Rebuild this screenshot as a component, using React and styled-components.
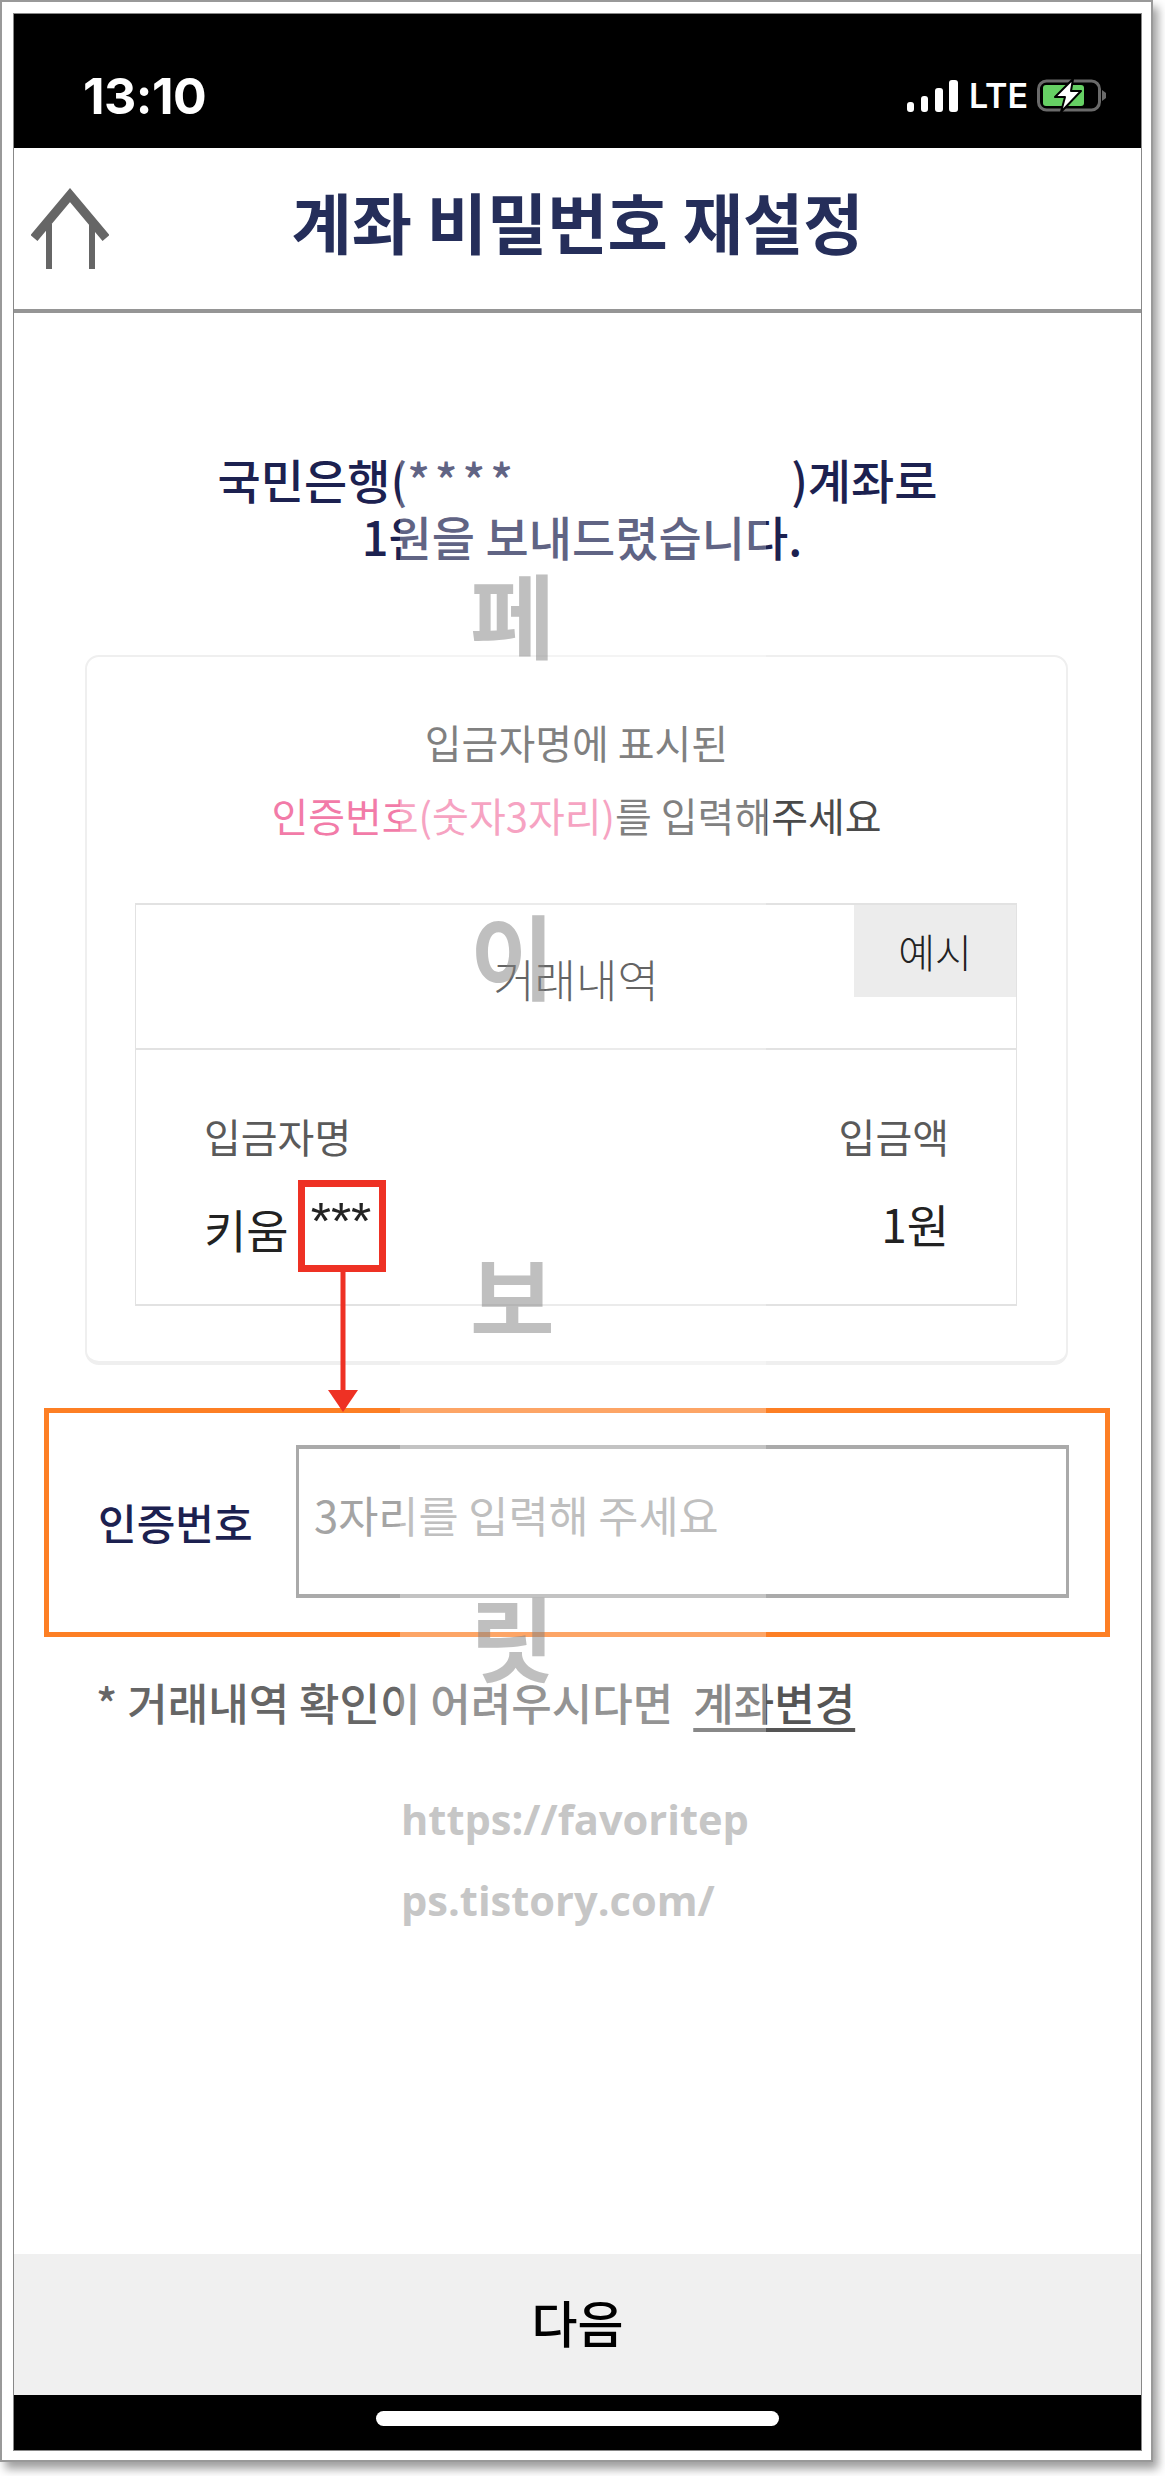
import React from "react";
import styled, { createGlobalStyle } from "styled-components";

const GlobalStyle = createGlobalStyle`
  html, body { margin: 0; padding: 0; background: #fff; }
  body { font-family: "Noto Sans CJK KR", "Noto Sans", sans-serif; }
`;

const Page = styled.div`
  width: 1165px;
  height: 2476px;
  overflow: hidden;
`;

const Frame = styled.div`
  box-sizing: border-box;
  width: 1153px;
  height: 2462px;
  padding: 11px;
  background: #fff;
  border: 2px solid #999;
  box-shadow: 5px 7px 9px rgba(0, 0, 0, 0.38);
`;

const Screen = styled.div`
  display: flex;
  flex-direction: column;
  box-sizing: border-box;
  width: 1129px;
  height: 2438px;
  border: 1px solid #888;
  background: #fff;
`;

const StatusBar = styled.div`
  flex: none;
  display: flex;
  align-items: center;
  justify-content: space-between;
  box-sizing: border-box;
  height: 134px;
  padding: 29px 35px 0 69px;
  background: #000;
  color: #fff;
  font-family: Inter, sans-serif;
`;

const Time = styled.span`
  font-size: 50px;
  font-weight: 700;
  letter-spacing: -0.5px;
  line-height: 48px;
`;

const StatusIcons = styled.div`
  display: flex;
  align-items: center;
`;

const Lte = styled.span`
  margin: 0 9px 0 11px;
  font-size: 34px;
  font-weight: 600;
  line-height: 34px;
`;

const Header = styled.header`
  flex: none;
  display: grid;
  grid-template-columns: 1fr auto 1fr;
  align-items: center;
  height: 161px;
  border-bottom: 4px solid #959595;
`;

const BackIcon = styled.svg`
  margin-left: 17px;
`;

const Title = styled.h1`
  margin: 0 0 16px;
  color: #252e5a;
  font-size: 65.5px;
  font-weight: 700;
  line-height: 80px;
`;

const Content = styled.main`
  position: relative;
  flex: 1;
  padding-top: 137px;
`;

const Message = styled.p`
  margin: 0 0 91px;
  color: #1c2150;
  font-size: 47px;
  font-weight: 500;
  line-height: 57px;
  text-align: center;
`;

const MessageLine = styled.span`
  display: block;
  padding-left: ${(p) => p.$indent || 0}px;
`;

const MaskedDigits = styled.span`
  letter-spacing: 5px;
`;

const Redacted = styled.span`
  display: inline-block;
  width: 273px;
`;

const Card = styled.section`
  box-sizing: border-box;
  width: 983px;
  height: 710px;
  margin-left: 71px;
  padding: 49px 48px 0;
  border: 2px solid #efefef;
  border-bottom-width: 4px;
  border-radius: 14px;
`;

const Guide = styled.p`
  margin: 0 0 51px;
  color: #4a4a4a;
  font-size: 40px;
  line-height: 73px;
  text-align: center;
`;

const Pink = styled.span`
  color: #f27ba8;
`;

const Table = styled.div`
  position: relative;
  box-sizing: border-box;
  width: 882px;
  height: 403px;
  border: 1px solid #e2e2e2;
  border-top-width: 2px;
  border-bottom-width: 2px;
`;

const TableHead = styled.div`
  box-sizing: border-box;
  height: 145px;
  padding-top: 46px;
  border-bottom: 2px solid #e2e2e2;
  color: #222;
  font-size: 45px;
  font-weight: 300;
  line-height: 56px;
  text-align: center;
`;

const ExampleTag = styled.span`
  position: absolute;
  top: 0;
  right: 0;
  width: 162px;
  height: 92px;
  background: #ececec;
  color: #222;
  font-size: 40px;
  font-weight: 300;
  line-height: 92px;
  text-align: center;
`;

const TableRow = styled.div`
  display: flex;
  justify-content: space-between;
  padding: 61px 67px 0 68px;
`;

const Column = styled.div`
  display: flex;
  flex-direction: column;
  gap: 34px;
  align-items: ${(p) => (p.$end ? "flex-end" : "flex-start")};
`;

const RowLabel = styled.span`
  color: #5a5a5a;
  font-size: 40px;
  line-height: 50px;
`;

const RowValue = styled.span`
  color: #222;
  font-size: 46px;
  line-height: 56px;
`;

const Masked = styled.span`
  position: relative;
  display: inline-block;
  margin-left: 22px;
  color: #222;
  font-family: "Liberation Sans", sans-serif;
  font-size: 52px;
  line-height: 52px;
  vertical-align: 9px;
`;

const Callout = styled.span`
  position: absolute;
  top: -15px;
  left: -13px;
  box-sizing: border-box;
  width: 88px;
  height: 92px;
  border: 7px solid #ee3124;
`;

const CalloutArrow = styled.svg`
  position: absolute;
  top: 85px;
  left: 23px;
`;

const CodeBox = styled.div`
  display: flex;
  align-items: center;
  box-sizing: border-box;
  width: 1066px;
  height: 229px;
  margin: 43px 0 0 30px;
  padding: 0 36px 3px 49px;
  border: 5px solid #fd7f24;
`;

const CodeLabel = styled.label`
  flex: none;
  width: 198px;
  color: #1c2150;
  font-size: 42px;
  font-weight: 500;
`;

const CodeInput = styled.input`
  flex: 1;
  box-sizing: border-box;
  min-width: 0;
  height: 153px;
  padding: 0 0 14px 15px;
  border: 3px solid #aaa;
  border-top-width: 4px;
  border-bottom-width: 4px;
  border-radius: 0;
  outline: none;
  font-family: inherit;
  font-size: 43.6px;

  &::placeholder {
    color: #a4a4a4;
    opacity: 1;
  }
`;

const Note = styled.p`
  margin: 35px 0 0 82px;
  color: #666;
  font-size: 44px;
  font-weight: 500;
  line-height: 60px;
`;

const ChangeLink = styled.a`
  margin-left: 20px;
  color: #555;
  text-decoration: underline;
  text-underline-offset: 7px;
`;

const Watermark = styled.div`
  position: absolute;
  top: 128px;
  left: 386px;
  width: 366px;
  pointer-events: none;
`;

const WatermarkGlyphs = styled.div`
  display: flex;
  flex-direction: column;
  gap: 249px;
  box-sizing: border-box;
  height: 1300px;
  padding: 125px 0 0 70px;
  background: rgba(255, 255, 255, 0.3);
  color: rgba(128, 128, 128, 0.5);
  font-size: 92px;
  font-weight: 700;
  line-height: 92px;
`;

const WatermarkUrl = styled.div`
  margin-top: 38px;
  padding-left: 1px;
  color: #c6c6c6;
  font-family: "Open Sans", sans-serif;
  font-size: 41.6px;
  font-weight: 700;
  line-height: 81px;
  white-space: nowrap;
`;

const NextButton = styled.button`
  flex: none;
  height: 141px;
  padding: 0 0 8px;
  border: 0;
  background: #f0f0f0;
  color: #000;
  font-family: inherit;
  font-size: 50px;
  font-weight: 500;
`;

const HomeBar = styled.div`
  flex: none;
  display: flex;
  justify-content: center;
  box-sizing: border-box;
  height: 55px;
  padding-top: 16px;
  background: #000;
`;

const HomeIndicator = styled.span`
  width: 403px;
  height: 15px;
  border-radius: 8px;
  background: #fff;
`;

const SignalIcon = () => (
  <svg width="51" height="32" viewBox="0 0 51 32" fill="#fff">
    <rect x="0" y="22" width="7" height="10" rx="3" />
    <rect x="14" y="16" width="7" height="16" rx="3" />
    <rect x="28" y="8" width="8" height="24" rx="3" />
    <rect x="42" y="0" width="9" height="32" rx="3" />
  </svg>
);

const BatteryIcon = () => (
  <svg width="69" height="33" viewBox="0 0 69 33">
    <rect x="1.5" y="2" width="61" height="29" rx="8" fill="none" stroke="#6a6a6a" strokeWidth="3" />
    <path d="M65 11 L69 14 V19 L65 22 Z" fill="#6a6a6a" />
    <rect x="6" y="6" width="41" height="21" rx="3" fill="#66d064" />
    <path
      d="M36 0 L18 18 H28 L24 33 L44 12 H34 L36 0 Z"
      fill="#fff"
      stroke="#000"
      strokeWidth="2"
      strokeLinejoin="round"
    />
  </svg>
);

const App = () => {
  return (
    <Page>
      <GlobalStyle />
      <Frame>
        <Screen>
          <StatusBar>
            <Time>13:10</Time>
            <StatusIcons>
              <SignalIcon />
              <Lte>LTE</Lte>
              <BatteryIcon />
            </StatusIcons>
          </StatusBar>

          <Header>
            <BackIcon width="78" height="81" viewBox="0 0 78 81" fill="none" stroke="#666">
              <path d="M3 50 L39 7 L75 50" strokeWidth="9" strokeLinejoin="miter" />
              <path d="M18 36 V81 M61 36 V81" strokeWidth="6" />
            </BackIcon>
            <Title>계좌 비밀번호 재설정</Title>
          </Header>

          <Content>
            <Message>
              <MessageLine>
                국민은행(<MaskedDigits>****</MaskedDigits>
                <Redacted />)계좌로
              </MessageLine>
              <MessageLine $indent={9}>1원을 보내드렸습니다.</MessageLine>
            </Message>

            <Card>
              <Guide>
                입금자명에 표시된
                <br />
                <Pink>인증번호(숫자3자리)</Pink>를 입력해주세요
              </Guide>
              <Table>
                <TableHead>거래내역</TableHead>
                <ExampleTag>예시</ExampleTag>
                <TableRow>
                  <Column>
                    <RowLabel>입금자명</RowLabel>
                    <RowValue>
                      키움
                      <Masked>
                        ***
                        <Callout>
                          <CalloutArrow width="30" height="140" viewBox="0 0 30 140">
                            <rect x="12.5" y="0" width="5" height="120" fill="#ee3124" />
                            <path d="M0 118 H30 L15 140 Z" fill="#ee3124" />
                          </CalloutArrow>
                        </Callout>
                      </Masked>
                    </RowValue>
                  </Column>
                  <Column $end>
                    <RowLabel>입금액</RowLabel>
                    <RowValue>1원</RowValue>
                  </Column>
                </TableRow>
              </Table>
            </Card>

            <CodeBox>
              <CodeLabel htmlFor="code">인증번호</CodeLabel>
              <CodeInput id="code" placeholder="3자리를 입력해 주세요" />
            </CodeBox>

            <Note>
              * 거래내역 확인이 어려우시다면
              <ChangeLink>계좌변경</ChangeLink>
            </Note>

            <Watermark>
              <WatermarkGlyphs>
                <span>페</span>
                <span>이</span>
                <span>보</span>
                <span>릿</span>
              </WatermarkGlyphs>
              <WatermarkUrl>
                https://favoritep
                <br />
                ps.tistory.com/
              </WatermarkUrl>
            </Watermark>
          </Content>

          <NextButton>다음</NextButton>
          <HomeBar>
            <HomeIndicator />
          </HomeBar>
        </Screen>
      </Frame>
    </Page>
  );
};

export default App;
